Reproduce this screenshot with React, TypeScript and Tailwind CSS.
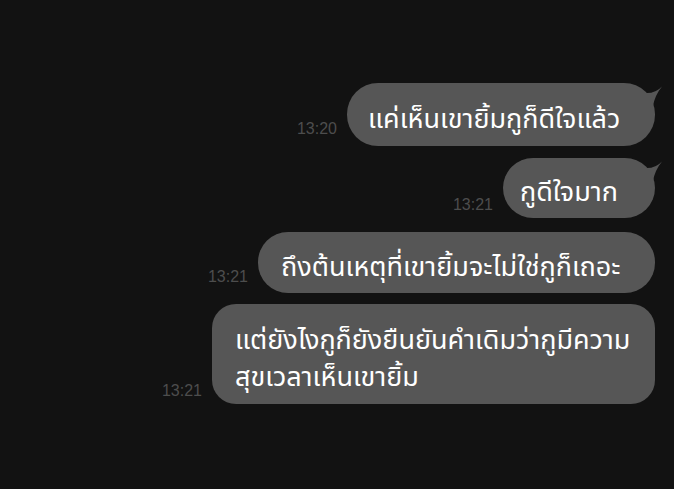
type Msg = {
  time: string;
  lines: string[];
  width: string;
  height: string;
  radius: string;
  tail?: boolean;
  gap: string;
  timeGap: string;
  pad: string;
};

const messages: Msg[] = [
  {
    time: "13:20",
    lines: ["แค่เห็นเขายิ้มกูก็ดีใจแล้ว"],
    width: "w-[308px]",
    height: "h-[63px]",
    radius: "rounded-[31px]",
    tail: true,
    gap: "mt-0",
    timeGap: "mb-[9px]",
    pad: "pl-[21px]",
  },
  {
    time: "13:21",
    lines: ["กูดีใจมาก"],
    width: "w-[152px]",
    height: "h-[60px]",
    radius: "rounded-[30px]",
    tail: true,
    gap: "mt-[12px]",
    timeGap: "mb-[5px]",
    pad: "pl-[17px]",
  },
  {
    time: "13:21",
    lines: ["ถึงต้นเหตุที่เขายิ้มจะไม่ใช่กูก็เถอะ"],
    width: "w-[397px]",
    height: "h-[61px]",
    radius: "rounded-[30px]",
    gap: "mt-[14px]",
    timeGap: "mb-[8px]",
    pad: "pl-[23px]",
  },
  {
    time: "13:21",
    lines: ["แต่ยังไงกูก็ยังยืนยันคำเดิมว่ากูมีความ", "สุขเวลาเห็นเขายิ้ม"],
    width: "w-[443px]",
    height: "h-[100px]",
    radius: "rounded-[24px]",
    gap: "mt-[11px]",
    timeGap: "mb-[5px]",
    pad: "pl-[23px]",
  },
];

// little horn on the top-right corner of outgoing bubbles
const Tail = () => (
  <svg className="absolute right-[-8px] top-[-2px]" width="30" height="30" viewBox="0 0 30 30">
    <path d="M11.5 12 Q22 13 29 5.5 Q22 14 20 25 L5 25 L5 12 Z" fill="#565656" />
  </svg>
);

export default function App() {
  return (
    <div className="w-[674px] h-[489px] bg-[#121212] overflow-hidden font-['Liberation_Sans',sans-serif]">
      <div className="flex flex-col items-end pt-[83px] pr-[19px]">
        {messages.map((m, i) => (
          <div key={i} className={`flex items-end gap-[10px] ${m.gap}`}>
            <span className={`text-[16px] leading-none text-[#4d4d4d] ${m.timeGap}`}>{m.time}</span>
            <div
              className={`relative ${m.width} ${m.height} ${m.radius} ${m.pad} bg-[#565656] flex flex-col justify-center pt-[9px] pr-[10px]`}
            >
              {m.tail && <Tail />}
              {m.lines.map((l, j) => (
                <p
                  key={j}
                  className="relative whitespace-nowrap text-white text-[27px] leading-[37px] font-['Noto_Sans_Thai','Noto_Sans','DejaVu_Sans',sans-serif]"
                >
                  {l}
                </p>
              ))}
            </div>
          </div>
        ))}
      </div>
    </div>
  );
}
